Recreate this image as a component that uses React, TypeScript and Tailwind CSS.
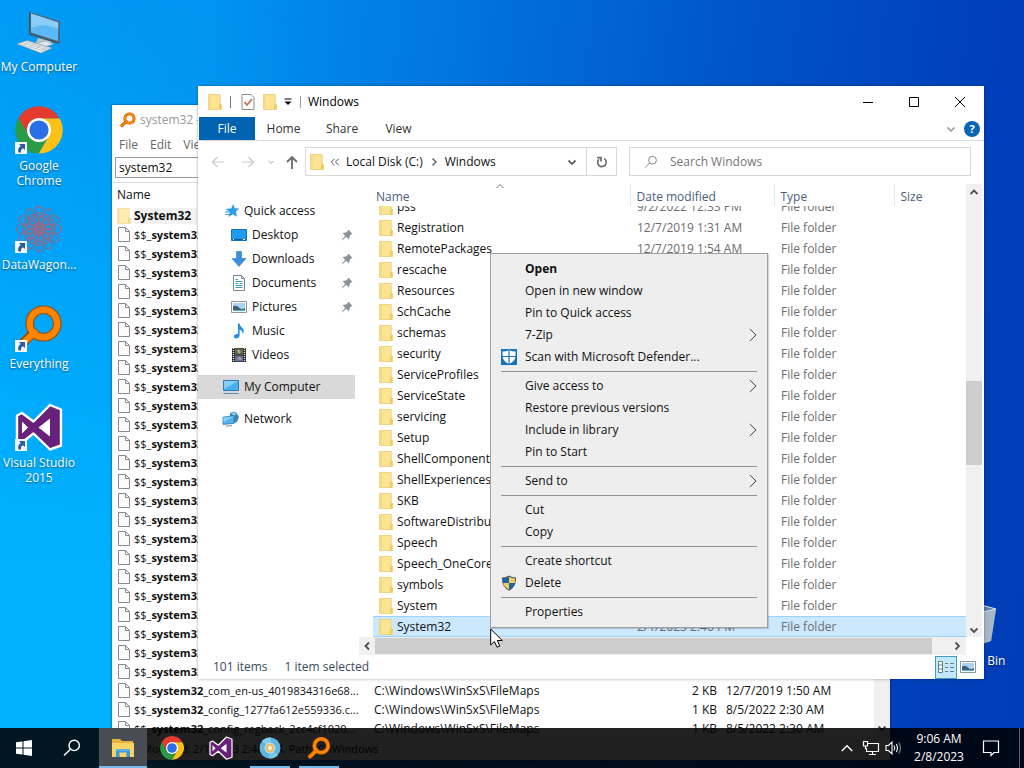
import React from "react";

type IconProps = { className?: string };

/* ---------- icons ---------- */

function FolderIcon({ className = "h-4 w-[14px]" }: IconProps) {
  return (
    <svg viewBox="0 0 14 16" className={`shrink-0 ${className}`} aria-hidden="true">
      <path d="M0.5 0.5H12.2V9.5L13.4 10.5V15.5H0.5Z" fill="#fde494" stroke="#e9cd72" strokeWidth="0.8" />
      <path d="M0.8 0.8H3V15.2H0.8Z" fill="#f6dc85" />
      <path d="M11 10.5L12.2 9.2L13.5 10.5V15.6H11Z" fill="#f0cd5c" />
    </svg>
  );
}

function FileIcon() {
  return (
    <svg viewBox="0 0 14 17" className="h-[17px] w-[14px] shrink-0" aria-hidden="true">
      <path d="M1.5 1.5H8.5L12.5 5.5V15.5H1.5Z" fill="#fbfbfb" stroke="#8a8a8a" />
      <path d="M8.5 1.5V5.5H12.5" fill="none" stroke="#8a8a8a" />
    </svg>
  );
}

function ComputerDesktopIcon() {
  return (
    <svg viewBox="0 -3 48 48" className="h-12 w-12" aria-hidden="true">
      <path d="M23 28L36 31L36 34L30 37L20 34Z" fill="#b9c6cf" />
      <path d="M21 33L31 31L39 34L29 37Z" fill="#dfe6ea" stroke="#8797a3" strokeWidth="0.5" />
      <path d="M14 2.5L44.5 12L44 34L14 24.5Z" fill="#3f4f5c" />
      <path d="M15 2L45 11.5L44.5 33L15 23.5Z" fill="#55636f" />
      <path d="M16 3.5L43.3 12.4L43 31L16 22.4Z" fill="#5db9f5" />
      <path d="M16 3.5L43.3 12.4L43 19Q30 12 16 18Z" fill="#8acdf9" />
      <path d="M2 34L12 30.5L37 38L26 43Z" fill="#f1f3f4" stroke="#8999a5" strokeWidth="0.7" />
      <path d="M5 34L29 41M8 32.8L32 40M11 31.8L34 38.7M8 36L14 31.5M14 37.5L20 33.2M20 39.3L26 35M26 41L32 37" stroke="#b6bfc5" strokeWidth="0.8" />
    </svg>
  );
}

function ChromeIcon({ className = "h-12 w-12" }: IconProps) {
  return (
    <svg viewBox="-24 -24 48 48" className={className} aria-hidden="true">
      <path d="M-20.6 -11.7A23.6 23.6 0 0 1 20.8 -11.5H0L-10 5.8Z" fill="#e33b2e" />
      <path d="M20.8 -11.5A23.6 23.6 0 0 1 -0.4 23.6L10 5.8L0 -11.5Z" fill="#fbc116" />
      <path d="M-0.4 23.6A23.6 23.6 0 0 1 -20.6 -11.7L-10 5.8H10Z" fill="#2a9b47" />
      <circle r="12" fill="#fff" />
      <circle r="9.6" fill="#2a6fe6" />
    </svg>
  );
}

const PETALS = [0, 30, 60, 90, 120, 150];

function WagonIcon() {
  return (
    <svg viewBox="-24 -24 48 48" className="h-12 w-12" fill="none" aria-hidden="true">
      {PETALS.map((a) => (
        <g key={a} transform={`rotate(${a})`}>
          <ellipse cx="0" cy="-12.5" rx="5.5" ry="10" stroke="#5d7cab" strokeWidth="1.5" />
          <ellipse cx="0" cy="12.5" rx="5.5" ry="10" stroke="#5d7cab" strokeWidth="1.5" />
          <ellipse cx="0" cy="-9" rx="4.5" ry="7.5" stroke="#93698a" strokeWidth="1.3" />
          <ellipse cx="0" cy="9" rx="4.5" ry="7.5" stroke="#93698a" strokeWidth="1.3" />
          <circle cx="0" cy="-22" r="1.2" fill="#8e6f92" />
          <circle cx="0" cy="22" r="1.2" fill="#8e6f92" />
        </g>
      ))}
      <circle r="4" stroke="#96708f" strokeWidth="1.2" />
    </svg>
  );
}

function EverythingIcon({ className = "h-12 w-12" }: IconProps) {
  return (
    <svg viewBox="0 0 48 48" className={className} fill="none" aria-hidden="true">
      <path d="M18.5 28.5L6 41" stroke="#9a4a08" strokeWidth="9" strokeLinecap="round" />
      <circle cx="28.5" cy="19.5" r="13.8" stroke="#9a4a08" strokeWidth="8.6" />
      <path d="M19.5 28.5L6 41" stroke="#ff8500" strokeWidth="6.4" strokeLinecap="round" />
      <circle cx="28.5" cy="19.5" r="13.8" stroke="#ff8500" strokeWidth="6.4" />
    </svg>
  );
}

function VisualStudioIcon({ className = "h-12 w-12" }: IconProps) {
  return (
    <svg viewBox="0 0 48 48" className={className} aria-hidden="true">
      <path
        d="M35 2L46 6.5V42.5L35 46.5L18.5 30.5L7 39.5L2 37V12.5L7 10L18.5 18.5Z"
        fill="#68217a"
        stroke="#fff"
        strokeWidth="2.4"
        strokeLinejoin="round"
      />
      <path d="M35 15.5V33.5L23.5 24.5Z" fill="#fff" />
      <path d="M7 18.5V30.5L13 24.5Z" fill="#fff" />
    </svg>
  );
}

function RecycleIcon() {
  return (
    <svg viewBox="0 0 48 48" className="h-12 w-12" aria-hidden="true">
      <path d="M5 7L24 2L46 8L41 40L24 45L10 40Z" fill="#8ba4bd" fillOpacity="0.85" />
      <path d="M46 8L28 12L26 45L41 40Z" fill="#a6b7c8" />
      <path d="M5 7L24 2L46 8L28 12Z" fill="#5d7fae" stroke="#d7e0ea" />
    </svg>
  );
}

function ShortcutBadge() {
  return (
    <svg viewBox="0 0 12 12" className="absolute bottom-0 left-0 h-3 w-3" aria-hidden="true">
      <path d="M0 0H12V12H0Z" fill="#f3f6fa" />
      <path d="M4 2H10V8L8 6.2Q5.5 7.5 6 10.5H3.5Q2 6.5 5.8 4Z" fill="#2d5b9c" />
    </svg>
  );
}

function StarIcon() {
  return (
    <svg viewBox="0 0 16 16" className="h-4 w-4" aria-hidden="true">
      <path d="M9.2 1L10.8 5.2L15.2 5.4L12 8.5L13 13.8L8.8 11.2L4.6 14L5.8 9L2.6 5.8L7.2 5.4Z" fill="#2d9be8" />
      <path d="M1 9H6M1.5 11.5H6M2 6.8H5" stroke="#2d9be8" />
    </svg>
  );
}

function DesktopIcon() {
  return (
    <svg viewBox="0 0 16 16" className="h-4 w-4" aria-hidden="true">
      <path d="M0.5 2.5H15.5V13.5H0.5Z" fill="#1f9bf0" stroke="#1374c4" />
      <path d="M1 12H15V13H1Z" fill="#0c5aa0" />
      <path d="M2 12.5H3M12 12.5H14" stroke="#fff" />
    </svg>
  );
}

function DownloadIcon() {
  return (
    <svg viewBox="0 0 16 16" className="h-4 w-4" aria-hidden="true">
      <path d="M5.5 0.5H10.5V7.5H15L8 15.5L1 7.5H5.5Z" fill="#3b8fdc" stroke="#2d7cc6" strokeWidth="0.6" />
    </svg>
  );
}

function DocumentIcon() {
  return (
    <svg viewBox="0 0 16 16" className="h-4 w-4" fill="none" aria-hidden="true">
      <path d="M2.5 0.5H10.5L13.5 3.5V15.5H2.5Z" fill="#fff" stroke="#7a8791" />
      <path d="M10.5 0.5V3.5H13.5" stroke="#7a8791" />
      <path d="M4.5 4.5H7M4.5 6.5H11.5M4.5 8.5H7M8.5 8.5H11.5M4.5 10.5H11.5M4.5 12.5H11.5" stroke="#3a9fb4" />
    </svg>
  );
}

function PictureIcon() {
  return (
    <svg viewBox="0 0 16 16" className="h-4 w-4" aria-hidden="true">
      <path d="M0.5 2.5H15.5V13.5H0.5Z" fill="#fff" stroke="#8a97a3" />
      <path d="M2 4H14V12H2Z" fill="#a9d3ef" />
      <path d="M2 7.5Q5 5.5 8 8.5T14 9V11H2Z" fill="#3f5f78" />
      <path d="M2 11H14V12H2Z" fill="#62b0df" />
    </svg>
  );
}

function MusicIcon() {
  return (
    <svg viewBox="0 0 16 16" className="h-4 w-4" aria-hidden="true">
      <path d="M7 0.5H8.6Q9 3.5 11.5 5.2Q14 7.8 11.6 11.5Q12.2 7.8 8.6 6.5V12.5Q8 15.5 4.8 15.5Q2.4 15 3 12.8Q4 10.5 7 11Z" fill="#1e90e0" />
    </svg>
  );
}

function VideoIcon() {
  return (
    <svg viewBox="0 0 16 16" className="h-4 w-4" aria-hidden="true">
      <path d="M1 1H15V15H1Z" fill="#2b2b2b" />
      <path d="M4 1.5H12V7.5H4Z" fill="#5b6b4d" />
      <path d="M4 8.5H12V14.5H4Z" fill="#5d6ea8" />
      <path d="M2.5 1V15M13.5 1V15" stroke="#e8e8e8" strokeWidth="1.4" strokeDasharray="1 1" />
      <path d="M6 4L8 2.5L10 5L8 7ZM6 12L9 9.5L11 13Z" fill="#b7ad7f" />
    </svg>
  );
}

function MonitorIcon() {
  return (
    <svg viewBox="0 0 18 16" className="h-4 w-[18px]" aria-hidden="true">
      <path d="M1.5 1.5H16.5V11.5H1.5Z" fill="#46b0f3" stroke="#2f7cb5" />
      <path d="M2 2H16L2 10Z" fill="#86cffa" />
      <path d="M1.5 14.5H16.5" stroke="#5f8fae" />
    </svg>
  );
}

function NetworkIcon() {
  return (
    <svg viewBox="0 0 18 16" className="h-4 w-[18px]" aria-hidden="true">
      <path d="M8 2L12 0.5L14.5 2L17 6L15 11L11 12.5L8 9Z" fill="#3f86b5" />
      <path d="M9 2.5L12 1L14 3L12 5Z" fill="#8ccbea" />
      <path d="M1 6.2L12 4.6V12.4L1 13.4Z" fill="#53b5ee" stroke="#2c7bb0" strokeWidth="0.8" />
      <path d="M1.5 6.7L11.5 5.2L1.5 11Z" fill="#8fd3f8" />
      <path d="M4 15.2L10 14.6" stroke="#6a8ea7" />
    </svg>
  );
}

function PinIcon() {
  return (
    <svg viewBox="0 0 12 12" className="h-3 w-3" aria-hidden="true">
      <path d="M7.2 0.6L11.4 4.8L10 5.4L8.6 7L8 10.4L5.2 7.8L1 11.4L0.6 11L4.2 6.8L1.6 4L5 3.4L6.6 2Z" fill="#8b9298" />
    </svg>
  );
}

function Chevron({ dir, className = "h-3 w-3", width = 1.8 }: { dir: "up" | "down" | "left" | "right"; className?: string; width?: number }) {
  const paths = {
    up: "M2.5 8L6 4.5L9.5 8",
    down: "M2.5 4.5L6 8L9.5 4.5",
    left: "M8 2.5L4.5 6L8 9.5",
    right: "M4.5 2.5L8 6L4.5 9.5",
  };
  return (
    <svg viewBox="0 0 12 12" className={`shrink-0 ${className}`} fill="none" stroke="currentColor" strokeWidth={width} aria-hidden="true">
      <path d={paths[dir]} />
    </svg>
  );
}

function DefenderIcon() {
  return (
    <svg viewBox="0 0 16 16" className="h-4 w-4" aria-hidden="true">
      <path d="M0 0H16V16H0Z" fill="#1673bd" />
      <path d="M1.5 2.5Q5.5 2.5 8 1Q10.5 2.5 14.5 2.5V7Q14 12.5 8 15Q2 12.5 1.5 7Z" fill="#fff" />
      <path d="M8 0V16M1 7.5H15" stroke="#1673bd" strokeWidth="1.2" />
    </svg>
  );
}

function UacShieldIcon() {
  return (
    <svg viewBox="0 0 16 16" className="h-4 w-4" aria-hidden="true">
      <path d="M1 2.5Q5 2.5 8 0.5Q11 2.5 15 2.5Q15.5 12 8 15.7Q0.5 12 1 2.5Z" fill="#4e5a66" />
      <path d="M2 3.4Q5.5 3.2 8 1.7V8H2.2Z" fill="#2062a8" />
      <path d="M14 3.4Q10.5 3.2 8 1.7V8H13.8Z" fill="#f2cf5b" />
      <path d="M2.2 8H8V14.5Q3 12 2.2 8Z" fill="#f2cf5b" />
      <path d="M13.8 8H8V14.5Q13 12 13.8 8Z" fill="#2062a8" />
    </svg>
  );
}

/* ---------- desktop ---------- */

function Shortcut({ lines, icon, badge = true }: { lines: string[]; icon: React.ReactNode; badge?: boolean }) {
  return (
    <button className="flex h-[99px] w-[76px] flex-col items-center leading-[15px] whitespace-nowrap text-white [text-shadow:0_1px_2px_rgb(0_0_0/0.5)]">
      <span className="relative mb-1 block h-12 w-12">
        {icon}
        {badge && <ShortcutBadge />}
      </span>
      {lines.map((line) => (
        <span key={line}>{line}</span>
      ))}
    </button>
  );
}

/* ---------- background search window ---------- */

const RESULTS = [
  { rest: "_com_en-us_4019834316e68...", size: "2 KB", date: "12/7/2019 1:50 AM" },
  { rest: "_config_1277fa612e559336.c...", size: "1 KB", date: "8/5/2022 2:30 AM" },
  { rest: "_config_regback_2cc4cf1020...", size: "1 KB", date: "8/5/2022 2:30 AM" },
];

function SearchWindow() {
  return (
    <section className="absolute top-[105px] left-[112px] flex w-[778px] flex-col bg-white shadow-[0_0_2px_rgb(0_0_0/0.6)]">
      <header className="flex h-[30px] items-center gap-1 pl-2 text-[#9a9a9a]">
        <EverythingIcon className="h-4 w-4" />
        system32 - Everything
      </header>
      <nav className="flex h-5 items-center gap-3 pl-[7px] text-[#666]">
        <button>File</button>
        <button>Edit</button>
        <button>View</button>
      </nav>
      <div className="border-b border-[#dcdcdc] px-[3px] pt-[2px] pb-1">
        <input aria-label="Search" defaultValue="system32" className="h-[21px] w-full border border-[#9a9a9a] px-[3px] outline-none" />
      </div>
      <div className="flex">
        <div className="min-w-0 flex-1">
          <table className="w-full table-fixed border-collapse">
            <colgroup>
              <col className="w-[258px]" />
              <col className="w-[262px]" />
              <col className="w-[90px]" />
              <col />
            </colgroup>
            <thead>
              <tr className="h-[23px] text-left">
                <th className="p-0 pl-[5px] font-normal">Name</th>
                <th className="p-0 font-normal">Path</th>
                <th className="p-0 font-normal">Size</th>
                <th className="p-0 font-normal">Date Modified</th>
              </tr>
            </thead>
            <tbody>
              <tr className="h-[19px]">
                <td className="p-0 pl-[5px]">
                  <span className="flex items-center gap-[3px]">
                    <FolderIcon className="h-4 w-[14px] opacity-70" />
                    <b className="bg-[#f2f2f2] pr-[6px]">System32</b>
                  </span>
                </td>
                <td className="p-0 pl-1">C:\Windows</td>
                <td />
                <td />
              </tr>
              {Array.from({ length: 27 }, (_, i) => {
                const r = RESULTS[i - 24];
                return (
                  <tr key={i} className="h-[19px]">
                    <td className="p-0 pl-[5px]">
                      <span className="flex items-center gap-[3px] text-[11px] leading-[17px] whitespace-nowrap">
                        <FileIcon />
                        <span>
                          $$_<b>system32</b>
                          {r?.rest}
                        </span>
                      </span>
                    </td>
                    <td className="p-0 pl-1">C:\Windows\WinSxS\FileMaps</td>
                    <td className="p-0 pr-[5px] text-right">{r?.size}</td>
                    <td className="p-0 pl-1 whitespace-nowrap">{r?.date}</td>
                  </tr>
                );
              })}
            </tbody>
          </table>
        </div>
        <div className="flex w-4 flex-col justify-end bg-[#f0f0f0] pb-1">
          <Chevron dir="down" className="mx-auto h-3 w-3 text-[#505050]" />
        </div>
      </div>
      <footer className="flex h-[22px] items-center bg-[#f6f6f6] px-[3px] text-[11px]">Date Modified: 2/1/2023 2:46 PM, Path: C:\Windows</footer>
    </section>
  );
}

/* ---------- file explorer ---------- */

const FOLDERS: [string, string][] = [
  ["pss", "9/2/2022 12:33 PM"],
  ["Registration", "12/7/2019 1:31 AM"],
  ["RemotePackages", "12/7/2019 1:54 AM"],
  ["rescache", "12/7/2019 1:14 AM"],
  ["Resources", "12/7/2019 1:14 AM"],
  ["SchCache", "12/7/2019 1:14 AM"],
  ["schemas", "12/7/2019 1:14 AM"],
  ["security", "12/7/2019 1:14 AM"],
  ["ServiceProfiles", "12/7/2019 1:14 AM"],
  ["ServiceState", "12/7/2019 1:14 AM"],
  ["servicing", "12/7/2019 1:14 AM"],
  ["Setup", "12/7/2019 1:14 AM"],
  ["ShellComponents", "12/7/2019 1:14 AM"],
  ["ShellExperiences", "12/7/2019 1:14 AM"],
  ["SKB", "12/7/2019 1:14 AM"],
  ["SoftwareDistribution", "12/7/2019 1:14 AM"],
  ["Speech", "12/7/2019 1:14 AM"],
  ["Speech_OneCore", "12/7/2019 1:14 AM"],
  ["symbols", "12/7/2019 1:14 AM"],
  ["System", "12/7/2019 1:14 AM"],
  ["System32", "2/1/2023 2:46 PM"],
];

const QUICK: { label: string; icon: React.ReactNode; pinned?: boolean }[] = [
  { label: "Desktop", icon: <DesktopIcon />, pinned: true },
  { label: "Downloads", icon: <DownloadIcon />, pinned: true },
  { label: "Documents", icon: <DocumentIcon />, pinned: true },
  { label: "Pictures", icon: <PictureIcon />, pinned: true },
  { label: "Music", icon: <MusicIcon /> },
  { label: "Videos", icon: <VideoIcon /> },
];

function TitleBar() {
  return (
    <header className="flex h-[31px] items-center pr-px pl-[10px] text-black">
      <FolderIcon />
      <span className="mx-2 h-3 w-px bg-[#777]" />
      <button aria-label="Properties" className="ml-[2px]">
        <svg viewBox="0 0 14 16" className="h-4 w-[14px]" fill="none" aria-hidden="true">
          <path d="M1 0.5H10L13 3.5V15.5H1Z" fill="#fff" stroke="#8c8c8c" />
          <path d="M3.5 8L6 11L11 5" stroke="#c8694a" strokeWidth="1.6" />
        </svg>
      </button>
      <button aria-label="New folder" className="ml-2">
        <FolderIcon />
      </button>
      <button aria-label="Customize toolbar" className="mx-[7px]">
        <svg viewBox="0 0 8 8" className="h-2 w-2" aria-hidden="true">
          <path d="M0.5 1H7.5" stroke="#000" />
          <path d="M0.5 3.5H7.5L4 7Z" fill="#000" />
        </svg>
      </button>
      <span className="mr-[7px] ml-px h-3 w-px bg-[#999]" />
      <h1>Windows</h1>
      <div className="ml-auto flex">
        <button aria-label="Minimize" className="flex h-[31px] w-[46px] items-center justify-center">
          <svg viewBox="0 0 10 10" className="h-[10px] w-[10px]" stroke="#000" aria-hidden="true"><path d="M0 5.5H10" /></svg>
        </button>
        <button aria-label="Maximize" className="flex h-[31px] w-[46px] items-center justify-center">
          <svg viewBox="0 0 10 10" className="h-[10px] w-[10px]" fill="none" stroke="#000" aria-hidden="true"><path d="M0.5 0.5H9.5V9.5H0.5Z" /></svg>
        </button>
        <button aria-label="Close" className="flex h-[31px] w-[46px] items-center justify-center">
          <svg viewBox="0 0 10 10" className="h-[10px] w-[10px]" stroke="#000" aria-hidden="true"><path d="M0 0L10 10M10 0L0 10" /></svg>
        </button>
      </div>
    </header>
  );
}

function Ribbon() {
  return (
    <nav className="flex h-6 items-stretch border-b border-[#dadbdc] pl-px text-[#333]">
      <button className="w-14 bg-[#0063b1] text-white">File</button>
      <button className="w-[57px]">Home</button>
      <button className="w-[60px]">Share</button>
      <button className="w-[53px]">View</button>
      <div className="ml-auto flex items-center gap-[7px] pr-1">
        <button aria-label="Expand ribbon" className="text-[#a8a8a8]">
          <Chevron dir="down" />
        </button>
        <button aria-label="Help" className="flex h-4 w-4 items-center justify-center rounded-full bg-[#0b63b5] text-[11px] font-bold text-white">
          ?
        </button>
      </div>
    </nav>
  );
}

function ArrowIcon({ d, className }: { d: string; className: string }) {
  return (
    <svg viewBox="0 0 14 14" className={`h-[14px] w-[14px] ${className}`} fill="none" stroke="currentColor" aria-hidden="true">
      <path d={d} />
    </svg>
  );
}

function AddressRow() {
  return (
    <div className="flex h-[43px] pt-[6px] pr-[13px]">
      <div className="flex h-[29px] w-[107px] items-center pl-[13px]">
        <button aria-label="Back"><ArrowIcon d="M13 7H1.5M6.5 2L1.5 7L6.5 12" className="text-[#c9c9c9] [stroke-width:1.2]" /></button>
        <button aria-label="Forward" className="ml-4"><ArrowIcon d="M1 7H12.5M7.5 2L12.5 7L7.5 12" className="text-[#c9c9c9] [stroke-width:1.2]" /></button>
        <button aria-label="Recent" className="ml-3 text-[#c9c9c9]"><Chevron dir="down" className="h-2 w-2" /></button>
        <button aria-label="Up" className="ml-[10px]"><ArrowIcon d="M7 14V2M2 7L7 2L12 7" className="text-[#6b6b6b] [stroke-width:1.8]" /></button>
      </div>
      <div className="flex h-[29px] min-w-0 flex-1 items-center border border-[#d9d9d9] pl-1">
        <FolderIcon />
        <svg viewBox="0 0 10 8" className="mx-[6px] h-2 w-[10px]" fill="none" stroke="#555" aria-hidden="true">
          <path d="M4.5 0.8L1.3 4L4.5 7.2M8.7 0.8L5.5 4L8.7 7.2" />
        </svg>
        <button>Local Disk (C:)</button>
        <Chevron dir="right" className="mx-[5px] h-3 w-3 text-[#6b6b6b]" width={1.5} />
        <button>Windows</button>
        <button aria-label="Previous locations" className="mr-2 ml-auto text-[#666]">
          <Chevron dir="down" />
        </button>
        <button aria-label="Refresh" className="flex h-full w-[30px] items-center justify-center border-l border-[#d9d9d9] text-[#666]">
          <svg viewBox="0 0 12 12" className="h-3 w-3" fill="none" stroke="currentColor" strokeWidth="1.6" aria-hidden="true">
            <path d="M8.2 2.6A4.3 4.3 0 1 1 3 3.2M1.2 1.6H5V5.4" />
          </svg>
        </button>
      </div>
      <label className="ml-3 flex h-[29px] w-[342px] items-center border border-[#d9d9d9] pl-[14px]">
        <svg viewBox="0 0 14 14" className="h-[14px] w-[14px]" fill="none" stroke="#888" aria-hidden="true">
          <circle cx="8.5" cy="5.2" r="3.9" />
          <path d="M5.6 8L1 12.6" />
        </svg>
        <input aria-label="Search Windows" placeholder="Search Windows" className="ml-3 flex-1 outline-none placeholder:text-[#767676] placeholder:opacity-100" />
      </label>
    </div>
  );
}

function NavPane() {
  return (
    <aside className="w-[161px] pt-[15px] pr-1">
      <button className="flex h-6 w-full items-center gap-1 pl-[26px]">
        <StarIcon />
        Quick access
      </button>
      {QUICK.map((q) => (
        <button key={q.label} className="flex h-6 w-full items-center gap-[5px] pr-[2px] pl-[33px]">
          {q.icon}
          {q.label}
          {q.pinned && <span className="ml-auto"><PinIcon /></span>}
        </button>
      ))}
      <button className="mt-2 flex h-6 w-full items-center gap-1 bg-[#d9d9d9] pl-6">
        <MonitorIcon />
        My Computer
      </button>
      <button className="mt-2 flex h-6 w-full items-center gap-1 pl-6">
        <NetworkIcon />
        Network
      </button>
    </aside>
  );
}

function FileTable() {
  return (
    <div className="min-w-0 flex-1 pl-[14px]">
      <table className="w-full table-fixed border-collapse">
        <colgroup>
          <col className="w-[257px]" />
          <col className="w-36" />
          <col className="w-[120px]" />
          <col />
        </colgroup>
        <thead>
          <tr className="h-[22px] text-left text-[#4c607a]">
            <th className="relative p-0 pt-[3px] pl-[3px] font-normal">
              Name
              <Chevron dir="up" className="absolute -top-1 left-[121px] h-3 w-3 text-[#777]" width={1} />
            </th>
            <th className="border-l border-[#e5e5e5] p-0 pt-[3px] pl-[6px] font-normal">Date modified</th>
            <th className="border-l border-[#e5e5e5] p-0 pt-[3px] pl-[6px] font-normal">Type</th>
            <th className="border-l border-[#e5e5e5] p-0 pt-[3px] pl-[6px] font-normal">Size</th>
          </tr>
        </thead>
        <tbody>
          {FOLDERS.map(([name, date], i) => {
            const clip = i === 0 ? "flex h-[11px] items-end overflow-hidden" : "flex h-[21px] items-center";
            const selected = name === "System32";
            return (
              <tr key={name} className={selected ? "bg-[#cce8ff] shadow-[inset_0_1px_#99d1ff,inset_0_-1px_#99d1ff]" : ""}>
                <td className="p-0 pl-[6px]">
                  <div className={clip}>
                    <span className="flex h-[21px] items-center gap-1">
                      <FolderIcon />
                      {name}
                    </span>
                  </div>
                </td>
                <td className="p-0 pl-[7px] text-[#6d6d6d]">
                  <div className={clip}><span className="leading-[21px]">{date}</span></div>
                </td>
                <td className="p-0 pl-[7px] text-[#6d6d6d]">
                  <div className={clip}><span className="leading-[21px]">File folder</span></div>
                </td>
                <td />
              </tr>
            );
          })}
        </tbody>
      </table>
    </div>
  );
}

function Explorer() {
  return (
    <section className="absolute top-[86px] left-[198px] flex w-[786px] flex-col bg-white shadow-[0_0_3px_rgb(0_0_0/0.35)]">
      <TitleBar />
      <Ribbon />
      <AddressRow />
      <div className="flex">
        <NavPane />
        <div className="flex min-w-0 flex-1 flex-col">
          <div className="flex pr-[2px]">
            <FileTable />
            <div className="flex w-4 flex-col items-center bg-[#f0f0f0] text-[#505050]">
              <Chevron dir="up" className="mt-[2px] h-3 w-3" />
              <div className="mt-[183px] mb-auto h-[84px] w-full bg-[#cdcdcd]" />
              <Chevron dir="down" className="mb-px h-3 w-3" />
            </div>
          </div>
          <div className="mr-[18px] flex h-[18px] items-center bg-[#f0f0f0] text-[#505050]">
            <Chevron dir="left" className="mx-[2px] h-3 w-3" />
            <div className="h-[16px] flex-1 bg-[#cdcdcd]" />
            <Chevron dir="right" className="mr-[3px] ml-[19px] h-3 w-3" />
          </div>
        </div>
      </div>
      <footer className="flex h-6 items-center gap-[17px] pl-[15px] text-[#3c4a5c]">
        <span>101 items</span>
        <span>1 item selected</span>
        <div className="ml-auto flex items-center gap-[3px] pr-2">
          <button aria-label="Details view" className="flex h-[23px] w-[22px] items-center justify-center border border-[#3f9bc9] bg-[#c3e8f7]">
            <svg viewBox="0 0 18 14" className="h-[14px] w-[18px]" fill="none" stroke="#5d7f8c" aria-hidden="true">
              <path d="M1.5 1.5H5.5V12.5H1.5ZM1.5 5H5.5M1.5 9H5.5" fill="#fff" />
              <path d="M8 3.5H11M13 3.5H17M8 7.5H11M13 7.5H17M8 11.5H11M13 11.5H17" />
            </svg>
          </button>
          <button aria-label="Thumbnail view" className="h-4 w-4">
            <PictureIcon />
          </button>
        </div>
      </footer>
    </section>
  );
}

/* ---------- context menu ---------- */

type Item = { label: string; bold?: boolean; sub?: boolean; icon?: React.ReactNode };

const MENU: Item[][] = [
  [
    { label: "Open", bold: true },
    { label: "Open in new window" },
    { label: "Pin to Quick access" },
    { label: "7-Zip", sub: true },
    { label: "Scan with Microsoft Defender...", icon: <DefenderIcon /> },
  ],
  [
    { label: "Give access to", sub: true },
    { label: "Restore previous versions" },
    { label: "Include in library", sub: true },
    { label: "Pin to Start" },
  ],
  [{ label: "Send to", sub: true }],
  [{ label: "Cut" }, { label: "Copy" }],
  [{ label: "Create shortcut" }, { label: "Delete", icon: <UacShieldIcon /> }],
  [{ label: "Properties" }],
];

function ContextMenu() {
  return (
    <div role="menu" className="absolute top-[253px] left-[490px] w-[278px] border border-[#a0a0a0] bg-[#eee] py-1 shadow-[1px_1px_1px_rgb(0_0_0/0.15)]">
      {MENU.map((group, g) => (
        <div key={g}>
          {g > 0 && <hr className="mx-[10px] my-[3px] border-t border-[#919191]" />}
          {group.map((item) => (
            <button key={item.label} role="menuitem" className="flex h-[22px] w-full items-center pr-[10px] text-left">
              <span className="flex w-[34px] pl-[10px]">{item.icon}</span>
              <span className={item.bold ? "font-bold" : ""}>{item.label}</span>
              {item.sub && (
                <svg viewBox="0 0 8 14" className="ml-auto h-[14px] w-2" fill="none" stroke="#444" aria-hidden="true">
                  <path d="M0.8 1L7 7L0.8 13" />
                </svg>
              )}
            </button>
          ))}
        </div>
      ))}
    </div>
  );
}

function Cursor() {
  return (
    <svg viewBox="0 0 13 20" className="absolute top-[628px] left-[490px] h-5 w-[13px]" aria-hidden="true">
      <path d="M0.7 1V17L4.4 13.6L7 19.2L9.8 18L7.3 12.5H12.3Z" fill="#fff" stroke="#000" strokeWidth="1" />
    </svg>
  );
}

/* ---------- taskbar ---------- */

function TaskButton({ label, children, running, active }: { label: string; children: React.ReactNode; running?: boolean; active?: boolean }) {
  return (
    <button
      aria-label={label}
      className={`relative flex h-10 w-12 items-center justify-center ${active ? "bg-[#474d52]" : ""}`}
    >
      {children}
      {running && <span className={`absolute bottom-0 h-[2px] bg-[#76b9ed] ${active ? "w-full" : "w-10"}`} />}
    </button>
  );
}

function Taskbar() {
  return (
    <footer className="absolute inset-x-0 bottom-0 flex h-10 items-center bg-black/87 text-white">
      <TaskButton label="Start">
        <svg viewBox="0 0 16 16" className="h-4 w-4" fill="#fff" aria-hidden="true">
          <path d="M0 2.3L6.5 1.4V7.5H0ZM7.5 1.2L16 0V7.5H7.5ZM0 8.5H6.5V14.6L0 13.7ZM7.5 8.5H16V16L7.5 14.8Z" />
        </svg>
      </TaskButton>
      <TaskButton label="Search">
        <svg viewBox="0 0 18 18" className="h-[18px] w-[18px]" fill="none" stroke="#fff" strokeWidth="1.4" aria-hidden="true">
          <circle cx="11.2" cy="6.4" r="5.2" />
          <path d="M7.4 10.2L1 16.6" />
        </svg>
      </TaskButton>
      <div className="ml-[3px] flex gap-px">
        <TaskButton label="File Explorer" running active>
          <svg viewBox="0 0 24 20" className="h-5 w-6" aria-hidden="true">
            <path d="M1 1H9L11 3H22V19H1Z" fill="#e8b33b" />
            <path d="M1 5H23V19H1Z" fill="#fbd465" />
            <path d="M5 19V11H19V19H15.5V14.5H8.5V19Z" fill="#3f9ad8" />
            <path d="M5 11H19V13H5Z" fill="#58b3ea" />
          </svg>
        </TaskButton>
        <TaskButton label="Google Chrome"><ChromeIcon className="h-6 w-6" /></TaskButton>
        <TaskButton label="Visual Studio"><VisualStudioIcon className="h-6 w-6" /></TaskButton>
        <TaskButton label="Disc" running>
          <svg viewBox="0 0 22 22" className="h-[22px] w-[22px]" aria-hidden="true">
            <circle cx="11" cy="11" r="10.5" fill="#5eb7e2" />
            <path d="M11 11L3 4A10.5 10.5 0 0 1 12 0.5Z" fill="#86cbec" />
            <path d="M11 11L19 18A10.5 10.5 0 0 1 10 21.5Z" fill="#7cc6ea" />
            <circle cx="11" cy="11" r="5" fill="#e6bd6e" stroke="#cfeaf6" strokeWidth="0.8" />
            <circle cx="11" cy="11" r="2" fill="#fff6e0" />
          </svg>
        </TaskButton>
        <TaskButton label="Everything" running><EverythingIcon className="h-6 w-6" /></TaskButton>
      </div>
      <div className="ml-auto flex h-10 items-center">
        <button aria-label="Show hidden icons"><Chevron dir="up" className="h-[18px] w-[18px]" width={1} /></button>
        <button aria-label="Network" className="ml-[6px]">
          <svg viewBox="0 0 18 16" className="h-4 w-[18px]" fill="none" stroke="#fff" strokeWidth="1.2" aria-hidden="true">
            <path d="M5 3.5H16.5V11.5H4.5V8M10.5 11.5V14.5M7 14.5H14M1.5 1.5H5.5V6H1.5ZM3.5 6V9" />
          </svg>
        </button>
        <button aria-label="Volume" className="ml-[5px]">
          <svg viewBox="0 0 18 16" className="h-4 w-[18px]" fill="none" stroke="#fff" strokeWidth="1.1" aria-hidden="true">
            <path d="M1 5.5H3.5L7 2V14L3.5 10.5H1ZM9 5.5Q10.5 8 9 10.5M11.3 4Q13.6 8 11.3 12" />
            <path d="M13.8 2.5Q17 8 13.8 13.5" stroke="#8b8b8b" />
          </svg>
        </button>
        <time className="ml-[11px] w-[50px] text-center leading-[18px] whitespace-nowrap">
          9:06 AM
          <br />
          2/8/2023
        </time>
        <button aria-label="Notifications" className="ml-[18px]">
          <svg viewBox="0 0 18 18" className="h-[18px] w-[18px]" fill="none" stroke="#fff" strokeWidth="1.2" aria-hidden="true">
            <path d="M1.5 2H16.5V13.5H12L9 16.5V13.5H1.5Z" />
          </svg>
        </button>
        <span className="mr-1 ml-[19px] h-10 w-px bg-[#5b6068]" />
      </div>
    </footer>
  );
}

export default function App() {
  return (
    <main className="relative h-screen overflow-hidden bg-[linear-gradient(97deg,#009cf5_0%,#0095f0_18%,#0074dd_42%,#0050c6_70%,#003fb9_90%,#003cb6_100%)] font-['Open_Sans','Noto_Sans',sans-serif] text-[12px] leading-4 text-[#111]">
      <div className="absolute inset-y-0 left-0 w-1/3 bg-[linear-gradient(180deg,transparent,#00b2ff_75%)] [mask-image:linear-gradient(90deg,#000_30%,transparent)]" />
      <div className="absolute top-[7px] left-px flex flex-col">
        <Shortcut lines={["My Computer"]} icon={<ComputerDesktopIcon />} badge={false} />
        <Shortcut lines={["Google", "Chrome"]} icon={<ChromeIcon />} />
        <Shortcut lines={["DataWagon..."]} icon={<WagonIcon />} />
        <Shortcut lines={["Everything"]} icon={<EverythingIcon />} />
        <Shortcut lines={["Visual Studio", "2015"]} icon={<VisualStudioIcon />} />
      </div>
      <div className="absolute top-[601px] right-3">
        <Shortcut lines={["Recycle Bin"]} icon={<RecycleIcon />} badge={false} />
      </div>
      <SearchWindow />
      <Explorer />
      <ContextMenu />
      <Cursor />
      <Taskbar />
    </main>
  );
}
